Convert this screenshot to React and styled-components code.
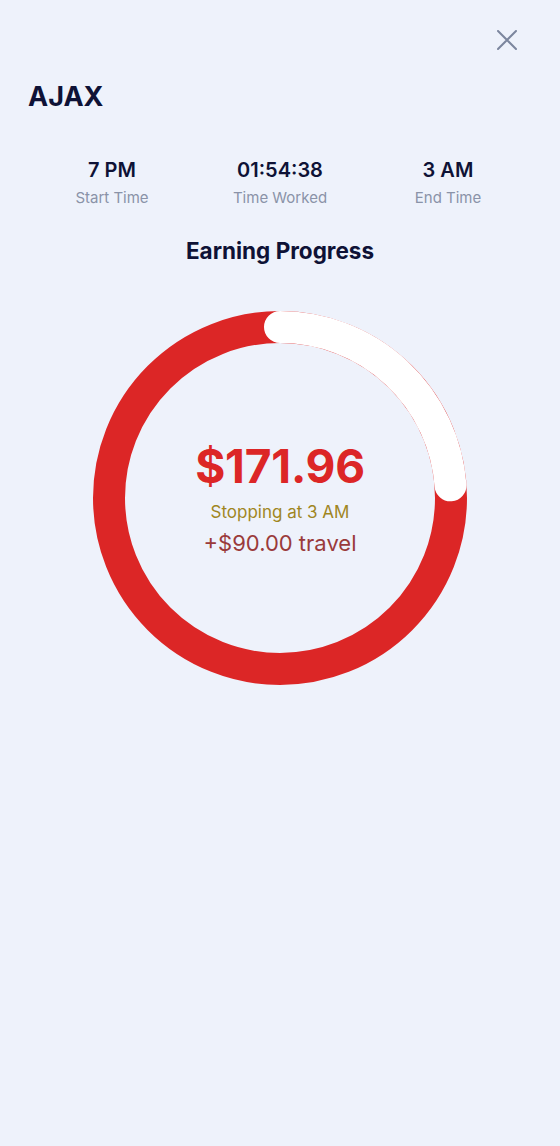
import React from "react";
import styled, { createGlobalStyle } from "styled-components";

const GlobalStyle = createGlobalStyle`
  html, body {
    margin: 0;
    padding: 0;
    background: #eef2fb;
  }
  body {
    font-family: Inter, "Noto Sans", "Liberation Sans", sans-serif;
    -webkit-font-smoothing: antialiased;
  }
  * { box-sizing: border-box; }
`;

const Page = styled.div`
  width: 560px;
  min-height: 1146px;
  background: #eef2fb;
  display: flex;
  flex-direction: column;
`;

const TopBar = styled.div`
  height: 80px;
  display: flex;
  align-items: center;
  justify-content: flex-end;
  padding-right: 43px;
`;

const CloseButton = styled.button`
  width: 20px;
  height: 20px;
  padding: 0;
  border: none;
  background: transparent;
  display: flex;
  align-items: center;
  justify-content: center;
  cursor: pointer;
`;

const Title = styled.h1`
  margin: 0;
  padding: 0 28px;
  font-size: 27px;
  line-height: 34px;
  font-weight: 700;
  color: #0e1236;
`;

const Stats = styled.div`
  margin-top: 44px;
  padding: 0 28px;
  display: grid;
  grid-template-columns: repeat(3, 1fr);
`;

const Stat = styled.div`
  display: flex;
  flex-direction: column;
  align-items: center;
`;

const StatValue = styled.div`
  font-size: 20px;
  line-height: 24px;
  font-weight: 600;
  color: #0e1236;
`;

const StatLabel = styled.div`
  margin-top: 7px;
  font-size: 15px;
  line-height: 18px;
  font-weight: 400;
  color: #8a93a8;
`;

const SectionTitle = styled.h2`
  margin: 30px 0 0;
  text-align: center;
  font-size: 22.5px;
  line-height: 28px;
  font-weight: 700;
  color: #0e1236;
`;

const RingWrap = styled.div`
  margin: 46px auto 0;
  width: 374px;
  height: 374px;
  display: grid;
  & > * {
    grid-area: 1 / 1;
  }
`;

const RingSvg = styled.svg`
  display: block;
`;

const Center = styled.div`
  display: flex;
  flex-direction: column;
  align-items: center;
  justify-content: center;
  padding-top: 0px;
`;

const Amount = styled.div`
  font-size: 46px;
  line-height: 54px;
  font-weight: 700;
  color: #dc2626;
  letter-spacing: -0.2px;
`;

const Stopping = styled.div`
  margin-top: 9px;
  font-size: 17px;
  line-height: 21px;
  color: #a0861f;
`;

const Travel = styled.div`
  margin-top: 7px;
  font-size: 22px;
  line-height: 27px;
  color: #9a3a3a;
`;

const R = 171;
const C = 2 * Math.PI * R;

function Ring({ fraction }) {
  return (
    <RingSvg width="374" height="374" viewBox="0 0 374 374">
      <circle cx="187" cy="187" r={R} fill="none" stroke="#dc2626" strokeWidth="32" />
      <circle
        cx="187"
        cy="187"
        r={R}
        fill="none"
        stroke="#ffffff"
        strokeWidth="32"
        strokeLinecap="round"
        strokeDasharray={`${C * fraction} ${C}`}
        transform="rotate(-90 187 187)"
      />
    </RingSvg>
  );
}

const stats = [
  { value: "7 PM", label: "Start Time" },
  { value: "01:54:38", label: "Time Worked" },
  { value: "3 AM", label: "End Time" },
];

export default function App() {
  return (
    <>
      <GlobalStyle />
      <Page>
        <TopBar>
          <CloseButton aria-label="Close">
            <svg width="20" height="20" viewBox="0 0 20 20">
              <path
                d="M1 1 L19 19 M19 1 L1 19"
                stroke="#7c869e"
                strokeWidth="2"
                strokeLinecap="round"
                fill="none"
              />
            </svg>
          </CloseButton>
        </TopBar>
        <Title>AJAX</Title>
        <Stats>
          {stats.map((s) => (
            <Stat key={s.label}>
              <StatValue>{s.value}</StatValue>
              <StatLabel>{s.label}</StatLabel>
            </Stat>
          ))}
        </Stats>
        <SectionTitle>Earning Progress</SectionTitle>
        <RingWrap>
          <Ring fraction={0.238} />
          <Center>
            <Amount>$171.96</Amount>
            <Stopping>Stopping at 3 AM</Stopping>
            <Travel>+$90.00 travel</Travel>
          </Center>
        </RingWrap>
      </Page>
    </>
  );
}
